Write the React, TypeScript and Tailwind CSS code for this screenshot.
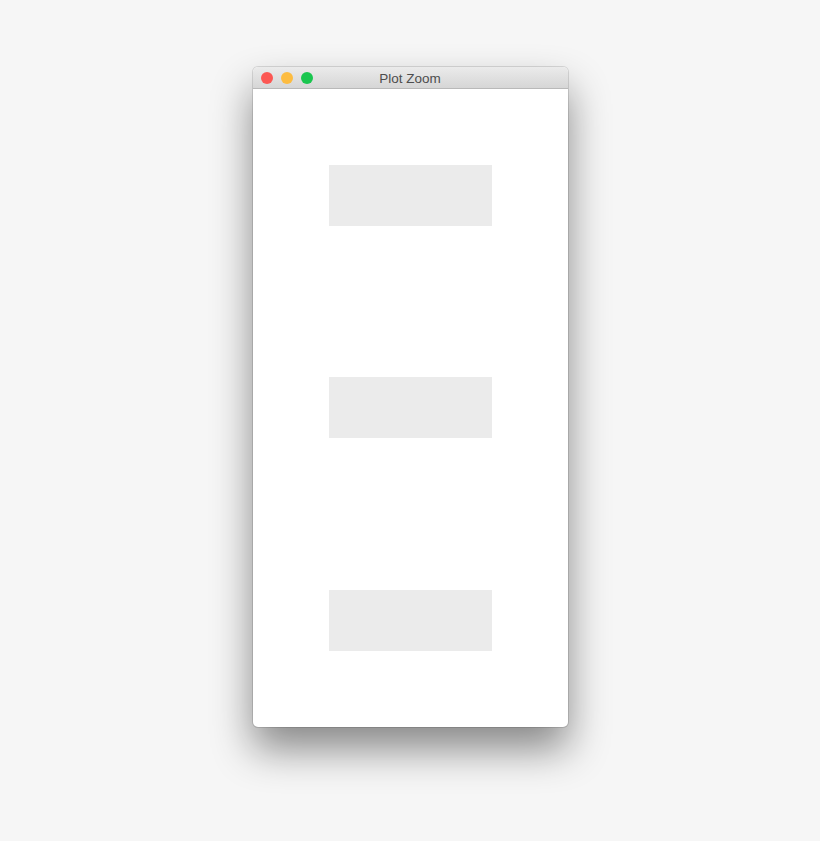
export default function App() {
  return (
    <div className="w-[820px] h-[841px] bg-[#f6f6f6] flex justify-center pt-[67px] font-['Helvetica_Neue','Liberation_Sans',Arial,sans-serif]">
      <div className="w-[315px] h-[660px] flex flex-col rounded-[5px] bg-white shadow-[0_22px_40px_rgba(0,0,0,0.45),0_0_0_1px_rgba(0,0,0,0.12)] overflow-hidden">
        {/* Title bar */}
        <div className="relative h-[22px] flex items-center justify-center bg-gradient-to-b from-[#ebebeb] to-[#d6d6d6] border-b border-[#b9b9b9]">
          <div className="absolute left-[8px] top-[5px] flex gap-[8px]">
            <span className="w-[12px] h-[12px] rounded-full bg-[#fc5753]" />
            <span className="w-[12px] h-[12px] rounded-full bg-[#fdbc40]" />
            <span className="w-[12px] h-[12px] rounded-full bg-[#1ac64f]" />
          </div>
          <span className="text-[13.5px] text-[#4d4d4d] leading-none pt-[2px]">Plot Zoom</span>
        </div>
        {/* Plot area */}
        <div className="flex-1 flex flex-col items-center justify-around">
          <div className="w-[163px] h-[61px] bg-[#ebebeb]" />
          <div className="w-[163px] h-[61px] bg-[#ebebeb]" />
          <div className="w-[163px] h-[61px] bg-[#ebebeb]" />
        </div>
      </div>
    </div>
  );
}
